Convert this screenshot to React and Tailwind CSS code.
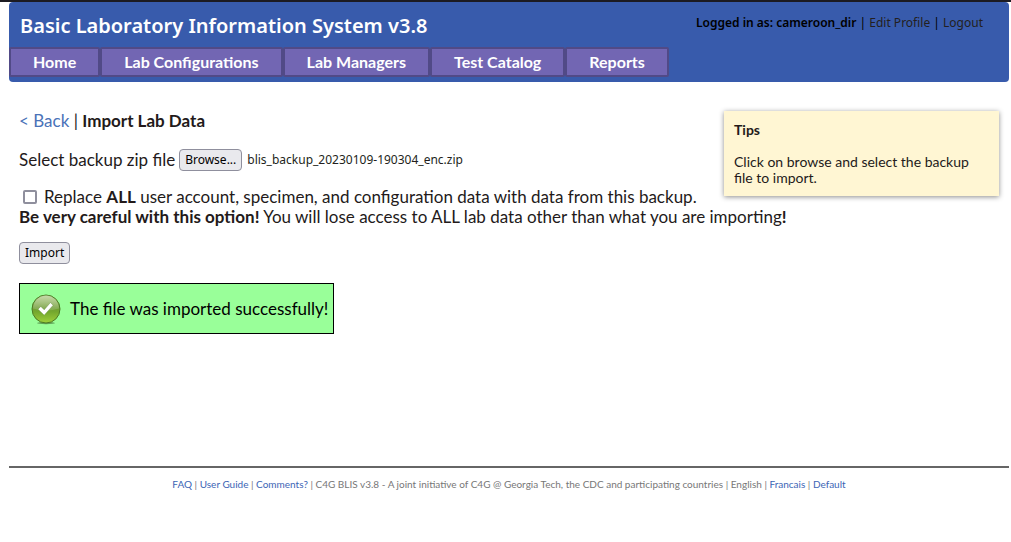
import { useRef, useState } from "react";

const NAV_ITEMS = ["Home", "Lab Configurations", "Lab Managers", "Test Catalog", "Reports"];

const CONTROL =
  "rounded-[4px] border border-[#8f8f9d] bg-[#e9e9ed] px-[5px] h-[22px] font-['Noto_Sans',sans-serif] text-[12px] leading-5 text-black whitespace-nowrap hover:bg-[#d0d0d7]";

function Header() {
  return (
    <header className="rounded-[4px] bg-[#385bac]">
      <div className="flex h-[45px] items-start justify-between pt-[10px] pr-[26px] pl-[11px] font-['Noto_Sans',sans-serif]">
        <h1 className="text-[20px] leading-7 font-semibold text-white">
          Basic Laboratory Information System v3.8
        </h1>
        <div className="pt-[2px] text-[12px] leading-[18px] whitespace-nowrap text-black">
          <span className="font-semibold">Logged in as: cameroon_dir</span> |{" "}
          <a href="#profile" className="text-[#231f20]">Edit Profile</a> |{" "}
          <a href="#logout" className="text-[#231f20]">Logout</a>
        </div>
      </div>
      <nav className="flex pb-[5px]">
        {NAV_ITEMS.map((item) => (
          <a
            key={item}
            href="#"
            className="h-[30px] rounded-[2px] border-2 border-[#514a87] bg-[#7266b3] px-[22px] text-[16px] leading-[26px] font-bold whitespace-nowrap text-white"
          >
            {item}
          </a>
        ))}
      </nav>
    </header>
  );
}

function Tips() {
  return (
    <aside className="float-right mr-[10px] h-[85px] w-[275px] bg-[#fff6d3] px-[10px] pt-[11px] text-[14px] leading-4 shadow-[0_1px_5px_rgba(0,0,0,0.45)]">
      <h2 className="mb-4 font-bold">Tips</h2>
      <p>Click on browse and select the backup file to import.</p>
    </aside>
  );
}

function SuccessIcon() {
  return (
    <svg width="30" height="32" viewBox="0 0 30 32" aria-hidden="true">
      <defs>
        <linearGradient id="ball" x1="0" y1="0" x2="0" y2="1">
          <stop offset="0" stopColor="#8fb356" />
          <stop offset="0.45" stopColor="#6f9c35" />
          <stop offset="0.6" stopColor="#74a82e" />
          <stop offset="1" stopColor="#9fd03a" />
        </linearGradient>
        <linearGradient id="gloss" x1="0" y1="0" x2="0" y2="1">
          <stop offset="0" stopColor="#fff" stopOpacity="0.5" />
          <stop offset="1" stopColor="#fff" stopOpacity="0.12" />
        </linearGradient>
      </defs>
      <ellipse cx="15" cy="30" rx="9" ry="1.2" fill="#38622a" opacity="0.6" />
      <circle cx="15" cy="16" r="14" fill="url(#ball)" stroke="#4d7a25" />
      <path d="M2 15.5a13 13 0 0 1 26 0q-13 4-26 0z" fill="url(#gloss)" />
      <path d="M7 16.2l2.8-2.8 3.4 3.4 6.2-7.2 2.8 2.6-9 10z" fill="#fff" stroke="#507d27" strokeWidth="0.4" />
    </svg>
  );
}

function ImportForm() {
  const fileInput = useRef(null);
  const [fileName, setFileName] = useState("blis_backup_20230109-190304_enc.zip");

  return (
    <form onSubmit={(event) => event.preventDefault()}>
      <div className="mb-4 flex items-center">
        <label htmlFor="backup" className="mr-1">Select backup zip file</label>
        <input
          id="backup"
          ref={fileInput}
          type="file"
          accept=".zip"
          tabIndex={-1}
          className="sr-only"
          onChange={(event) => setFileName(event.target.files[0]?.name ?? "")}
        />
        <button type="button" className={CONTROL} onClick={() => fileInput.current.click()}>
          Browse...
        </button>
        <span className="ml-[5px] font-['Noto_Sans',sans-serif] text-[12px] text-[#231f20]">{fileName}</span>
      </div>
      <div className="flex items-center">
        <input
          id="replace"
          type="checkbox"
          className="mr-[7px] ml-1 size-[14px] appearance-none rounded-[2px] border-2 border-[#8f8f9d] bg-white checked:bg-[#385bac]"
        />
        <label htmlFor="replace">
          Replace <b>ALL</b> user account, specimen, and configuration data with data from this backup.
        </label>
      </div>
      <p>
        <b>Be very careful with this option!</b> You will lose access to ALL lab data other than what you are
        importing<b>!</b>
      </p>
      <button type="submit" className={`mt-[15px] ${CONTROL}`}>Import</button>
    </form>
  );
}

function Footer() {
  const link = "text-[#3c65b5]";
  return (
    <footer className="mt-[132px] border-t-2 border-[#666] pt-[9px] text-center text-[10px] leading-[14px] text-[#777]">
      <a href="#faq" className={link}>FAQ</a> | <a href="#guide" className={link}>User Guide</a> |{" "}
      <a href="#comments" className={link}>Comments?</a> | C4G BLIS v3.8 - A joint initiative of C4G @ Georgia
      Tech, the CDC and participating countries | English | <a href="#fr" className={link}>Francais</a> |{" "}
      <a href="#default" className={link}>Default</a>
    </footer>
  );
}

export default function App() {
  return (
    <div className="min-h-screen border-t-2 border-[#1c1b22] bg-white pr-[2px] pl-[9px] font-[Lato,sans-serif] text-[#231a1a]">
      <Header />
      <main className="pt-[29px] pl-[10px]">
        <Tips />
        <div className="text-[17px] leading-5">
          <div className="mb-[18px]">
            <a href="#back" className="text-[#4a72b8]">&lt; Back</a> | <b>Import Lab Data</b>
          </div>
          <ImportForm />
          <div
            role="status"
            className="mt-[19px] flex h-[51px] w-fit items-center gap-[9px] border border-black bg-[#99ff99] pr-[5px] pl-[11px] text-black"
          >
            <SuccessIcon />
            The file was imported successfully!
          </div>
        </div>
      </main>
      <Footer />
    </div>
  );
}
